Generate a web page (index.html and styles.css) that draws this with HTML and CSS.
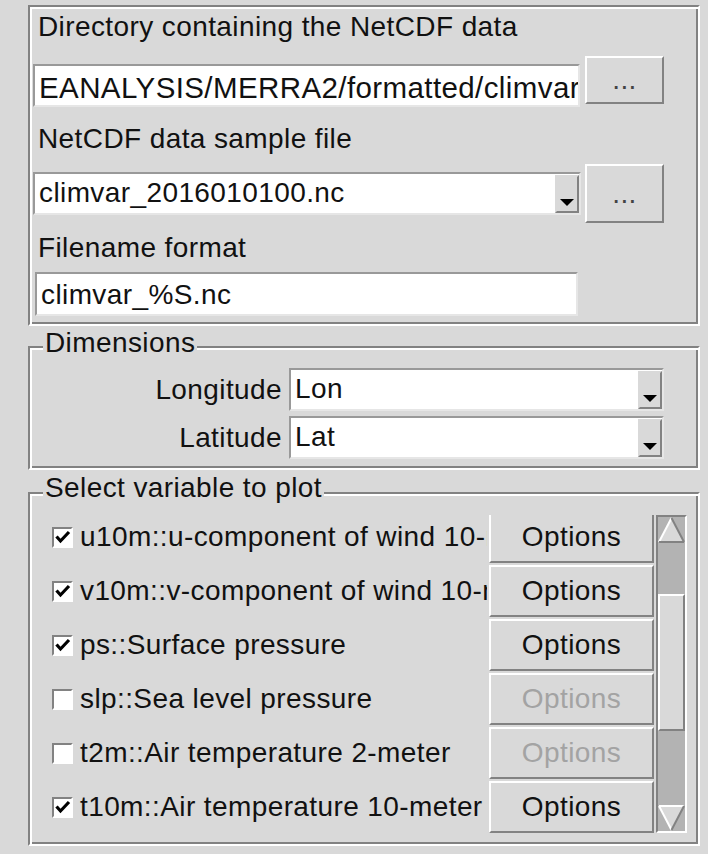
FILE: index.html
```html
<!DOCTYPE html>
<html>
<head>
<meta charset="utf-8">
<link rel="stylesheet" href="styles.css">
</head>
<body>
<div class="app">
  <div class="group g1">
    <div class="lbl l1">Directory containing the NetCDF data</div>
    <div class="row r1">
      <div class="entry e1">EANALYSIS/MERRA2/formatted/climvar</div>
      <div class="btn dots b1">...</div>
    </div>
    <div class="lbl l2">NetCDF data sample file</div>
    <div class="row r2">
      <div class="combo c1">
        <span class="ctext">climvar_2016010100.nc</span>
        <span class="arrow"><svg width="14" height="7" viewBox="0 0 14 7"><polygon points="0,0 14,0 7,7" fill="#000"/></svg></span>
      </div>
      <div class="btn dots b2">...</div>
    </div>
    <div class="lbl l3">Filename format</div>
    <div class="entry e3">climvar_%S.nc</div>
  </div>

  <div class="group g2">
    <div class="legend">Dimensions</div>
    <div class="dimrow d1">
      <span class="dimlbl">Longitude</span>
      <div class="combo c2">
        <span class="ctext">Lon</span>
        <span class="arrow"><svg width="14" height="7" viewBox="0 0 14 7"><polygon points="0,0 14,0 7,7" fill="#000"/></svg></span>
      </div>
    </div>
    <div class="dimrow d2">
      <span class="dimlbl">Latitude</span>
      <div class="combo c2">
        <span class="ctext">Lat</span>
        <span class="arrow"><svg width="14" height="7" viewBox="0 0 14 7"><polygon points="0,0 14,0 7,7" fill="#000"/></svg></span>
      </div>
    </div>
  </div>

  <div class="group g3">
    <div class="legend">Select variable to plot</div>
    <div class="varbody">
      <div class="varlist">
        <div class="varinner">
          <div class="varrow">
            <div class="var"><span class="cb on"><svg width="17" height="17" viewBox="0 0 17 17"><path d="M2.5 7.5 L6.5 12 L15 3" fill="none" stroke="#000" stroke-width="3.2"/></svg></span><span class="vname">u10m::u-component of wind 10-meter</span></div>
            <div class="opt">Options</div>
          </div>
          <div class="varrow">
            <div class="var"><span class="cb on"><svg width="17" height="17" viewBox="0 0 17 17"><path d="M2.5 7.5 L6.5 12 L15 3" fill="none" stroke="#000" stroke-width="3.2"/></svg></span><span class="vname">v10m::v-component of wind 10-meter</span></div>
            <div class="opt">Options</div>
          </div>
          <div class="varrow">
            <div class="var"><span class="cb on"><svg width="17" height="17" viewBox="0 0 17 17"><path d="M2.5 7.5 L6.5 12 L15 3" fill="none" stroke="#000" stroke-width="3.2"/></svg></span><span class="vname">ps::Surface pressure</span></div>
            <div class="opt">Options</div>
          </div>
          <div class="varrow">
            <div class="var"><span class="cb"></span><span class="vname">slp::Sea level pressure</span></div>
            <div class="opt disabled">Options</div>
          </div>
          <div class="varrow">
            <div class="var"><span class="cb"></span><span class="vname">t2m::Air temperature 2-meter</span></div>
            <div class="opt disabled">Options</div>
          </div>
          <div class="varrow">
            <div class="var"><span class="cb on"><svg width="17" height="17" viewBox="0 0 17 17"><path d="M2.5 7.5 L6.5 12 L15 3" fill="none" stroke="#000" stroke-width="3.2"/></svg></span><span class="vname">t10m::Air temperature 10-meter</span></div>
            <div class="opt">Options</div>
          </div>
        </div>
      </div>
      <div class="sb">
        <div class="sb-arrow"><svg width="27" height="26" viewBox="0 0 27 26"><polygon points="13.5,1 1,25 26,25" fill="#d9d9d9"/><line x1="1" y1="25" x2="13.5" y2="1" stroke="#fff" stroke-width="2"/><line x1="13.5" y1="1" x2="26" y2="25" stroke="#828282" stroke-width="2"/><line x1="1" y1="25" x2="26" y2="25" stroke="#828282" stroke-width="2"/></svg></div>
        <div class="sb-gap1"></div>
        <div class="sb-thumb"></div>
        <div class="sb-gap2"></div>
        <div class="sb-arrow"><svg width="27" height="26" viewBox="0 0 27 26"><polygon points="1,1 26,1 13.5,25" fill="#d9d9d9"/><line x1="1" y1="1" x2="26" y2="1" stroke="#fff" stroke-width="2"/><line x1="1" y1="1" x2="13.5" y2="25" stroke="#fff" stroke-width="2"/><line x1="26" y1="1" x2="13.5" y2="25" stroke="#828282" stroke-width="2"/></svg></div>
      </div>
    </div>
  </div>
</div>
</body>
</html>
```

FILE: styles.css
```css
* { box-sizing: border-box; }

body {
  margin: 0;
  background: #d9d9d9;
  font-family: "Liberation Sans", Arial, sans-serif;
  font-size: 28px;
  letter-spacing: 0.4px;
  color: #111;
  width: 708px;
  height: 854px;
  overflow: hidden;
}

.app {
  padding: 5px 0 0 28px;
  width: 700px;
}

.group {
  border: 2px solid;
  border-color: #828282 #fff #fff #828282;
  box-shadow: inset 2px 2px #fff, inset -2px -2px #828282;
  display: flex;
  flex-direction: column;
}

/* ---------- group 1 ---------- */
.g1 {
  height: 321px;
  padding: 4px 0 0 3px;
}

.lbl {
  height: 30px;
  line-height: 30px;
  padding-left: 5px;
  white-space: nowrap;
}

.l1 { margin-top: 1px; }
.l2 { margin-top: 17px; }
.l3 { margin-top: 10px; }

.row {
  display: flex;
  align-items: flex-start;
}

.r1 { margin-top: 14px; }
.r2 { margin-top: 10px; }

.entry {
  height: 43px;
  background: #fff;
  border: 2px solid;
  border-color: #999 #e6e6e6 #e6e6e6 #999;
  padding: 2px 0 0 4px;
  line-height: 39px;
  white-space: nowrap;
  overflow: hidden;
}

.e1 {
  width: 547px;
  margin-top: 8px;
  font-size: 29.5px;
}

.e3 {
  width: 543px;
  height: 44px;
  margin: 9px 0 0 2px;
  padding-top: 1px;
}

.btn {
  background: #d9d9d9;
  border: 2px solid;
  border-color: #fff #828282 #828282 #fff;
  display: flex;
  align-items: center;
  justify-content: center;
  line-height: 30px;
  color: #444;
}

.b1 {
  width: 79px;
  height: 48px;
  margin-left: 5px;
}

.b2 {
  width: 79px;
  height: 59px;
  margin-left: 4px;
}

.combo {
  height: 43px;
  background: #fff;
  border: 2px solid;
  border-color: #999 #e6e6e6 #e6e6e6 #999;
  display: flex;
  align-items: stretch;
  overflow: hidden;
}

.ctext {
  flex: 1;
  padding-left: 4px;
  line-height: 37px;
  white-space: nowrap;
  overflow: hidden;
}

.arrow {
  flex: none;
  width: 24px;
  margin-top: 1px;
  background: #d9d9d9;
  border: 2px solid;
  border-color: #d9d9d9 #828282 #828282 #d9d9d9;
  display: flex;
  align-items: flex-end;
  justify-content: center;
  padding-bottom: 5px;
}

.arrow svg { display: block; }

.c1 {
  width: 548px;
  margin-top: 8px;
}

/* ---------- group 2 ---------- */
.g2 {
  margin-top: 20px;
  height: 124px;
}

.legend {
  align-self: flex-start;
  margin: -20px 0 0 13px;
  padding: 0 2px;
  background: #d9d9d9;
  line-height: 30px;
  height: 30px;
  white-space: nowrap;
}

.dimrow {
  display: flex;
  align-items: center;
}

.d1 { margin-top: 10px; }
.d2 { margin-top: 5px; }

.dimlbl {
  width: 252px;
  margin-right: 7px;
  text-align: right;
  line-height: 30px;
}

.c2 { width: 375px; }

/* ---------- group 3 ---------- */
.g3 {
  margin-top: 22px;
  height: 354px;
}

.g3 .legend { margin-top: -21px; }

.varbody {
  display: flex;
  margin-top: 12px;
}

.varlist {
  width: 624px;
  height: 318px;
  overflow: hidden;
}

.varinner { margin-top: -4px; }

.varrow {
  display: flex;
  height: 54px;
  align-items: flex-start;
}

.var {
  width: 457px;
  height: 52px;
  padding-left: 22px;
  display: flex;
  align-items: center;
  overflow: hidden;
  white-space: nowrap;
}

.cb {
  flex: none;
  width: 21px;
  height: 21px;
  margin-right: 7px;
  background: #fff;
  border: 2px solid;
  border-color: #828282 #fff #fff #828282;
  display: flex;
  align-items: center;
  justify-content: center;
}

.cb svg { display: block; }

.vname { line-height: 30px; }

.opt {
  flex: none;
  width: 165px;
  height: 52px;
  margin-left: 2px;
  background: #d9d9d9;
  border: 2px solid;
  border-color: #fff #828282 #828282 #fff;
  display: flex;
  align-items: center;
  justify-content: center;
  line-height: 30px;
}

.opt.disabled { color: #a3a3a3; }

.sb {
  flex: none;
  width: 31px;
  height: 318px;
  margin-left: 2px;
  background: #b3b3b3;
  border: 2px solid;
  border-color: #828282 #fff #fff #828282;
  display: flex;
  flex-direction: column;
}

.sb-arrow { height: 26px; flex: none; }
.sb-arrow svg { display: block; }

.sb-gap1 { height: 51px; flex: none; }

.sb-thumb {
  height: 137px;
  flex: none;
  background: #d9d9d9;
  border: 2px solid;
  border-color: #fff #828282 #828282 #fff;
}

.sb-gap2 { flex: 1; }
```
